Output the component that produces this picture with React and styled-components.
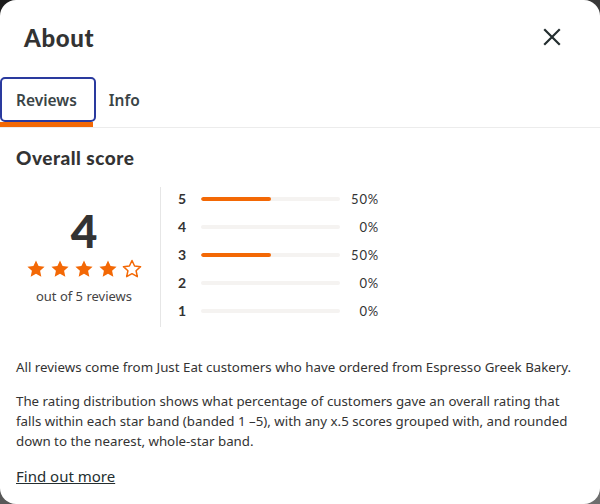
import React from 'react';
import styled, { createGlobalStyle } from 'styled-components';

const GlobalStyle = createGlobalStyle`
  html, body {
    margin: 0;
    padding: 0;
  }
  body {
    background: linear-gradient(160deg, #1c1c1c 0%, #4a4a4a 50%, #6e6e6e 100%);
    font-family: "Noto Sans", "Open Sans", sans-serif;
    color: #242e30;
  }
`;

const ratings = [
  { stars: 5, percent: 50 },
  { stars: 4, percent: 0 },
  { stars: 3, percent: 50 },
  { stars: 2, percent: 0 },
  { stars: 1, percent: 0 },
];

const StarIcon = ({ filled }) => (
  <svg width="20" height="20" viewBox="0 0 24 24" aria-hidden="true">
    <path
      d="M12 1.8l3.1 6.6 7.2.8-5.4 4.9 1.5 7.1L12 17.6l-6.4 3.6 1.5-7.1-5.4-4.9 7.2-.8z"
      fill={filled ? '#f36805' : '#fff'}
      stroke="#f36805"
      strokeWidth={filled ? 0 : 1.8}
      strokeLinejoin="round"
    />
  </svg>
);

const CloseIcon = () => (
  <svg width="18" height="18" viewBox="0 0 18 18" aria-hidden="true">
    <path d="M2 2L16 16M16 2L2 16" stroke="#242e30" strokeWidth="2.2" strokeLinecap="square" />
  </svg>
);

const App = () => {
  return (
    <>
      <GlobalStyle />
      <Modal>
        <Header>
          <Title>About</Title>
          <CloseButton aria-label="Close">
            <CloseIcon />
          </CloseButton>
        </Header>
        <Tabs>
          <Tab $active>Reviews</Tab>
          <Tab>Info</Tab>
        </Tabs>
        <Content>
          <SectionTitle>Overall score</SectionTitle>
          <ScoreSection>
            <ScoreSummary>
              <BigScore>4</BigScore>
              <Stars>
                {[1, 2, 3, 4, 5].map((n) => (
                  <StarIcon key={n} filled={n <= 4} />
                ))}
              </Stars>
              <ReviewCount>out of 5 reviews</ReviewCount>
            </ScoreSummary>
            <Distribution>
              {ratings.map((r) => (
                <RatingRow key={r.stars}>
                  <RatingLabel>{r.stars}</RatingLabel>
                  <BarTrack>
                    <BarFill style={{ width: `${r.percent}%` }} />
                  </BarTrack>
                  <Percent>{r.percent}%</Percent>
                </RatingRow>
              ))}
            </Distribution>
          </ScoreSection>
          <Paragraph>
            All reviews come from Just Eat customers who have ordered from Espresso Greek Bakery.
          </Paragraph>
          <Paragraph>
            The rating distribution shows what percentage of customers gave an overall rating that
            falls within each star band (banded 1 –5), with any x.5 scores grouped with, and rounded
            down to the nearest, whole-star band.
          </Paragraph>
          <MoreLink href="#">Find out more</MoreLink>
        </Content>
      </Modal>
    </>
  );
};

export default App;

const Modal = styled.div`
  width: 600px;
  height: 504px;
  background: #fff;
  border-radius: 16px;
  overflow: hidden;
  display: flex;
  flex-direction: column;
`;

const Header = styled.div`
  display: flex;
  justify-content: space-between;
  align-items: center;
  height: 77px;
  padding: 0 39px 3px 24px;
  box-sizing: border-box;
`;

const Title = styled.h2`
  margin: 0;
  font-family: "Lato", sans-serif;
  font-weight: 900;
  font-size: 24px;
  color: #333;
  letter-spacing: 0.6px;
`;

const CloseButton = styled.button`
  border: none;
  background: none;
  padding: 0;
  display: flex;
  cursor: pointer;
`;

const Tabs = styled.div`
  display: flex;
  border-bottom: 1px solid #ececec;
`;

const Tab = styled.button`
  position: relative;
  height: 50px;
  padding: 0 16px;
  border: none;
  border-bottom: 5px solid ${(p) => (p.$active ? '#f36805' : 'transparent')};
  background: none;
  font-family: "Noto Sans", sans-serif;
  font-weight: 600;
  font-size: 15.5px;
  color: #3a4446;
  cursor: pointer;

  &::after {
    content: '';
    display: ${(p) => (p.$active ? 'block' : 'none')};
    position: absolute;
    left: 0;
    right: -3px;
    top: 0;
    bottom: 0;
    border: 2px solid #2a3a9e;
    border-radius: 5px;
  }
`;

const Content = styled.div`
  padding: 0 16px;
`;

const SectionTitle = styled.h3`
  margin: 18px 0 18px;
  font-family: "Lato", sans-serif;
  font-weight: 900;
  font-size: 19px;
  letter-spacing: 0.5px;
  color: #333;
`;

const ScoreSection = styled.div`
  display: flex;
  margin-bottom: 30px;
`;

const ScoreSummary = styled.div`
  width: 136px;
  padding-right: 8px;
  display: flex;
  flex-direction: column;
  align-items: center;
  justify-content: center;
  border-right: 1px solid #e6e6e6;
`;

const BigScore = styled.div`
  font-family: "Lato", sans-serif;
  font-weight: 900;
  font-size: 46px;
  line-height: 44px;
  color: #333;
`;

const Stars = styled.div`
  display: flex;
  gap: 4px;
  margin: 6px 0 8px;
`;

const ReviewCount = styled.div`
  font-size: 13px;
  color: #444;
`;

const Distribution = styled.div`
  display: flex;
  flex-direction: column;
  padding-left: 17px;
`;

const RatingRow = styled.div`
  display: flex;
  align-items: center;
  height: 28px;
  padding-bottom: 5px;
  box-sizing: border-box;
`;

const RatingLabel = styled.span`
  width: 23px;
  font-family: "Lato", sans-serif;
  font-weight: 700;
  font-size: 14px;
  color: #333;
`;

const BarTrack = styled.div`
  width: 139px;
  height: 4px;
  border-radius: 2px;
  background: #f5f3f1;
  overflow: hidden;
`;

const BarFill = styled.div`
  height: 100%;
  border-radius: 2px;
  background: #f36805;
`;

const Percent = styled.span`
  width: 39px;
  text-align: right;
  font-family: "Lato", sans-serif;
  font-size: 13px;
  color: #333;
  letter-spacing: 0.8px;
`;

const Paragraph = styled.p`
  margin: 0 0 14px;
  font-size: 13.3px;
  line-height: 20px;
  color: #333;
`;

const MoreLink = styled.a`
  display: inline-block;
  margin-top: -1px;
  font-size: 15px;
  color: #242e30;
  text-decoration: underline;
`;
